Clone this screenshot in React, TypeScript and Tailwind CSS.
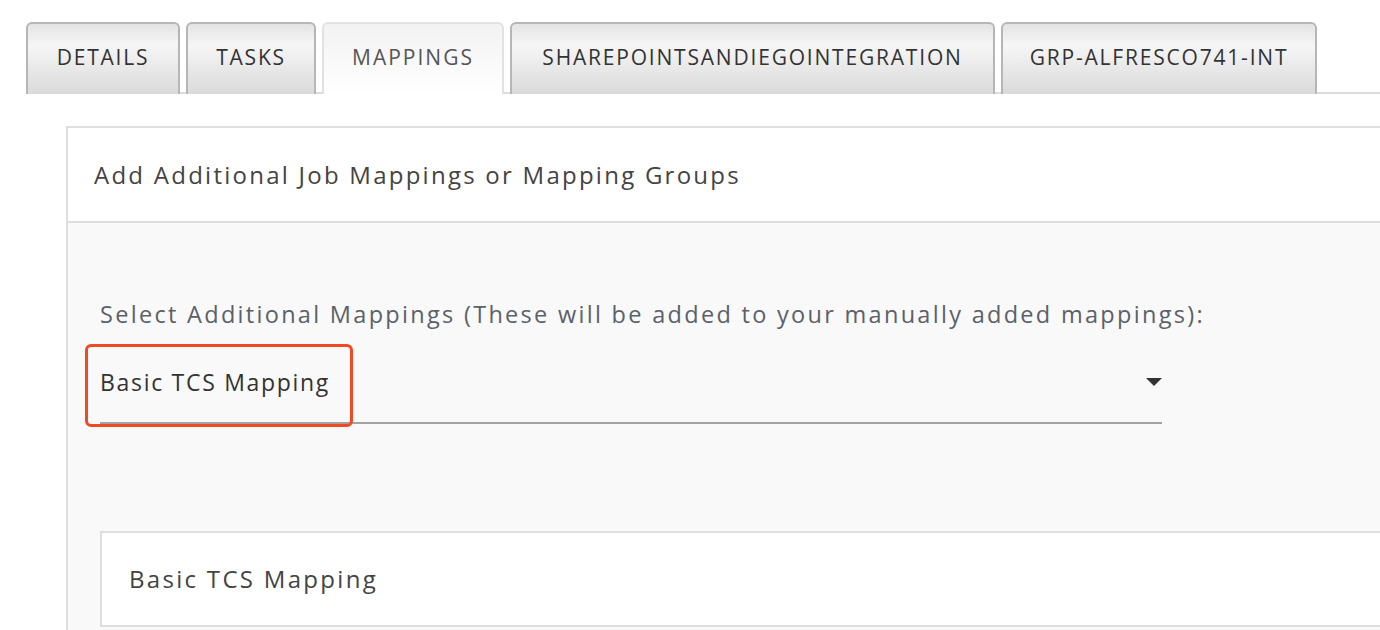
const tabs = [
  { label: "DETAILS", width: "w-[154px]" },
  { label: "TASKS", width: "w-[130px]" },
  { label: "MAPPINGS", width: "w-[182px]", active: true },
  { label: "SHAREPOINTSANDIEGOINTEGRATION", width: "w-[485px]" },
  { label: "GRP-ALFRESCO741-INT", width: "w-[316px]" },
];

function Tab({ label, width, active }: { label: string; width: string; active?: boolean }) {
  if (active) {
    return (
      <div
        className={`${width} -mb-[2px] flex h-[72px] items-center justify-center rounded-t-[6px] border-2 border-b-0 border-[#e2e2e2] bg-gradient-to-b from-[#f2f2f2] to-white pb-[2px] text-[21px] tracking-[2px] text-[#555]`}
      >
        {label}
      </div>
    );
  }
  return (
    <div
      className={`${width} -mb-[2px] flex h-[72px] items-center justify-center rounded-t-[6px] border-2 border-b-0 border-[#b6b6b6] bg-gradient-to-b from-[#e3e3e3] via-[#f6f6f6] via-30% to-[#dadada] pb-[2px] text-[21px] tracking-[1.8px] text-[#333]`}
    >
      {label}
    </div>
  );
}

export default function App() {
  return (
    <div className="h-[630px] w-[1380px] overflow-hidden bg-white font-['Open_Sans',sans-serif]">
      <div className="ml-[26px] flex items-end gap-[6px] border-b-2 border-[#dcdcdc] pt-[22px]">
        {tabs.map((t) => (
          <Tab key={t.label} {...t} />
        ))}
      </div>

      <div className="ml-[66px] mt-[32px] w-[1340px] border-2 border-[#dedede]">
        <div className="flex h-[95px] items-center border-b-2 border-[#dedede] bg-white px-[26px] text-[24px] tracking-[2.25px] text-[#444]">
          Add Additional Job Mappings or Mapping Groups
        </div>

        <div className="bg-[#f9f9f9] pl-[32px] pt-[74px] pb-[4px]">
          <div className="text-[23.5px] font-medium tracking-[2.3px] text-[#5b6169]">
            Select Additional Mappings (These will be added to your manually added mappings):
          </div>

          <div className="relative mt-[18px] w-[1062px]">
            <div className="flex h-[74px] items-center justify-between border-b-2 border-[#a2a2a2] pb-[9px]">
              <span className="text-[23px] tracking-[1.7px] text-[#333]">Basic TCS Mapping</span>
              <svg width="16" height="8" viewBox="0 0 16 8">
                <path d="M0 0 H16 L8 8 Z" fill="#333" />
              </svg>
            </div>
            <div className="absolute -left-[15px] -top-[6px] h-[83px] w-[268px] rounded-[6px] border-[3px] border-[#f04a24]" />
          </div>

          <div className="mt-[107px] flex h-[96px] items-center border-2 border-[#dedede] bg-white pl-[27px] text-[24px] tracking-[2.3px] text-[#444]">
            Basic TCS Mapping
          </div>
        </div>
      </div>
    </div>
  );
}
